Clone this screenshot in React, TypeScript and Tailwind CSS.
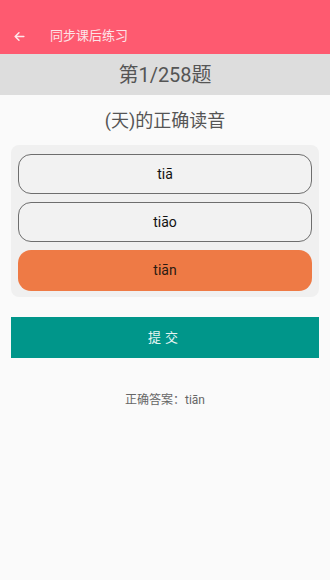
import React from "react";

export default function App() {
  const font = { fontFamily: 'Roboto, "Noto Sans CJK SC", sans-serif' };
  return (
    <div className="w-[330px] h-[580px] bg-[#fafafa] flex flex-col" style={font}>
      <div className="h-[54px] bg-[#fe5a70] flex items-end pb-[10px]">
        <svg className="ml-[13px] mb-[1px]" width="13" height="13" viewBox="0 0 24 24" fill="none" stroke="#fde8eb" strokeWidth="2.8" strokeLinecap="round" strokeLinejoin="round">
          <path d="M20 12H4M11 5l-7 7 7 7" />
        </svg>
        <span className="ml-[24px] text-[13px] leading-[16px] text-[#fde4e8]">同步课后练习</span>
      </div>
      <div className="h-[41px] bg-[#dddddd] flex items-center justify-center">
        <span className="text-[20px] text-[#555555]">第1/258题</span>
      </div>
      <div className="h-[50px] flex items-center justify-center">
        <span className="text-[18px] text-[#555555]">(天)的正确读音</span>
      </div>
      <div className="mx-[11px] rounded-[8px] bg-[#f0f0f0] px-[7px] pt-[9px] pb-[6px] flex flex-col gap-[8px]">
        <div className="h-[40px] rounded-[13px] border-[1.5px] border-[#6e6e6e] bg-[#f2f2f2] flex items-center justify-center text-[14px] text-[#111]">tiā</div>
        <div className="h-[40px] rounded-[13px] border-[1.5px] border-[#6e6e6e] bg-[#f2f2f2] flex items-center justify-center text-[14px] text-[#111]">tiāo</div>
        <div className="h-[41px] rounded-[13px] bg-[#ee7a45] flex items-center justify-center text-[14px] text-[#2a1a12]">tiān</div>
      </div>
      <div className="mx-[11px] mt-[20px] h-[41px] bg-[#00968a] flex items-center justify-center text-[13px] text-[#e6f5f3] tracking-[4px]">提交</div>
      <div className="mt-[33px] text-center text-[12px] text-[#666666]">正确答案：tiān</div>
    </div>
  );
}
